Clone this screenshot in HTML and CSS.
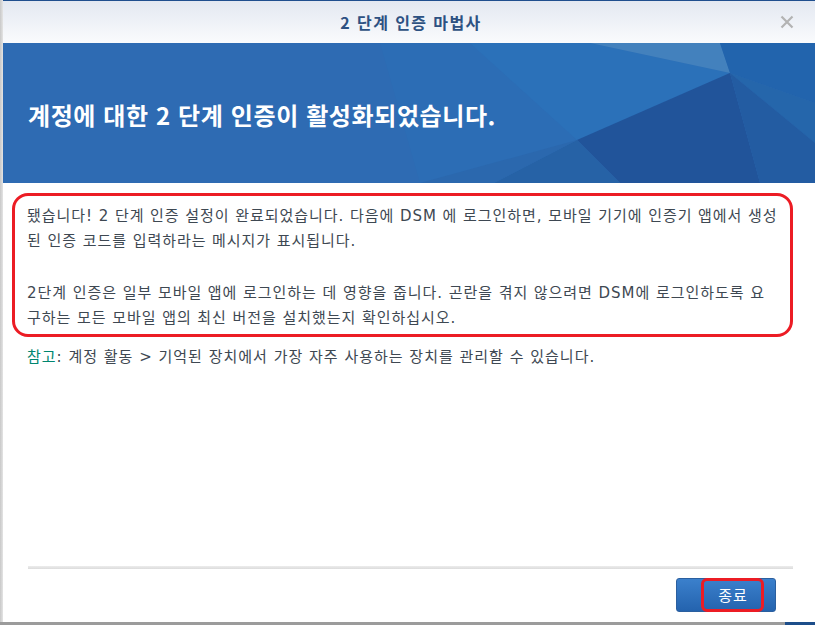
FILE: index.html
```html
<!DOCTYPE html>
<html lang="ko">
<head>
    <meta charset="UTF-8">
    <title>2 단계 인증 마법사</title>
    <link rel="stylesheet" href="styles.css">
</head>
<body>
    <div class="frame">
        <div class="dialog">
            <div class="dialog-header">
                <span class="dialog-title">2 단계 인증 마법사</span>
                <svg class="close-btn" width="14" height="14" viewBox="0 0 14 14">
                    <path d="M1.5 1.5 L12.5 12.5 M12.5 1.5 L1.5 12.5" stroke="#b3b3b3" stroke-width="2.2" fill="none"/>
                </svg>
            </div>

            <div class="banner">
                <svg class="banner-bg" width="815" height="140" viewBox="0 0 815 140" preserveAspectRatio="none">
                    <rect width="815" height="140" fill="#2e6bb3"/>
                    <polygon points="380,0 590,0 730,30 577,97 470,140 420,140" fill="#2c6db5"/>
                    <polygon points="470,0 590,0 730,30 577,97" fill="#2b71b9"/>
                    <polygon points="590,0 720,0 730,30" fill="#4381bd"/>
                    <polygon points="720,0 815,0 815,60 730,30" fill="#2264ad"/>
                    <polygon points="730,30 815,60 815,100" fill="#2566ab"/>
                    <polygon points="730,30 577,97 620,140 760,140" fill="#21549a"/>
                    <polygon points="730,30 760,140 815,140 815,100" fill="#235ca2"/>
                    <polygon points="577,97 494,140 620,140" fill="#2662a6"/>
                    <polygon points="420,140 494,140 577,97" fill="#2b68ae"/>
                </svg>
                <h1 class="banner-text">계정에 대한 2 단계 인증이 활성화되었습니다.</h1>
            </div>

            <div class="content">
                <div class="highlight">
                    <p>됐습니다! 2 단계 인증 설정이 완료되었습니다. 다음에 DSM 에 로그인하면, 모바일 기기에 인증기 앱에서 생성<br>된 인증 코드를 입력하라는 메시지가 표시됩니다.</p>
                    <p>2단계 인증은 일부 모바일 앱에 로그인하는 데 영향을 줍니다. 곤란을 겪지 않으려면 DSM에 로그인하도록 요<br>구하는 모든 모바일 앱의 최신 버전을 설치했는지 확인하십시오.</p>
                </div>
                <p class="note"><span class="note-label">참고</span>: 계정 활동 &gt; 기억된 장치에서 가장 자주 사용하는 장치를 관리할 수 있습니다.</p>
            </div>

            <div class="footer">
                <div class="separator"></div>
                <div class="footer-buttons">
                    <button class="primary-btn"><span class="btn-mark">종료</span></button>
                </div>
            </div>
        </div>
        <div class="bottom-strip"><div class="strip-blue"></div></div>
    </div>
</body>
</html>
```

FILE: styles.css
```css
html, body {
    margin: 0;
    padding: 0;
}
body {
    width: 815px;
    height: 625px;
    overflow: hidden;
    background-color: #fff;
    font-family: "DejaVu Sans", "Noto Sans CJK KR", sans-serif;
    color: #3e4852;
}
.frame {
    width: 815px;
    height: 625px;
    display: flex;
    flex-direction: column;
    background: linear-gradient(to right, #c8c8c8, #e4e4e4 3px, #fff 3px);
}
.dialog {
    height: 622px;
    margin-left: 3px;
    background-color: #fff;
    display: flex;
    flex-direction: column;
}
.dialog-header {
    height: 42px;
    border-top: 1px solid #1f4f8e;
    background: linear-gradient(to bottom, #e3e8f1, #fafbfd);
    display: flex;
    align-items: center;
    justify-content: center;
    position: relative;
}
.dialog-title {
    font-family: "Noto Sans CJK KR", sans-serif;
    font-size: 16px;
    font-weight: bold;
    letter-spacing: 1.4px;
    color: #2d5182;
    margin-left: 4px;
}
.close-btn {
    position: absolute;
    right: 21px;
    top: 14px;
}
.banner {
    height: 140px;
    position: relative;
    overflow: hidden;
    display: flex;
    align-items: center;
}
.banner-bg {
    position: absolute;
    left: -3px;
    top: 0;
}
.banner-text {
    position: relative;
    margin: 0 0 0 25px;
    padding-top: 2px;
    font-family: "Noto Sans CJK KR", sans-serif;
    font-size: 24px;
    font-weight: bold;
    letter-spacing: 0.6px;
    color: #fff;
}
.content {
    flex: 1;
    padding: 10px 22px 0 9px;
}
.highlight {
    border: 3px solid #ec1c24;
    border-radius: 16px;
    padding: 8px 10px 3px 12px;
}
.highlight p {
    margin: 0 0 27px 0;
    font-size: 15px;
    line-height: 25px;
    letter-spacing: 0.95px;
    white-space: nowrap;
}
.highlight p:last-child {
    margin-bottom: 0;
}
.note {
    margin: 8px 0 0 15px;
    font-size: 15px;
    line-height: 25px;
    letter-spacing: 1px;
    white-space: nowrap;
}
.note-label {
    color: #00866f;
}
.footer {
    margin: 0 22px 0 25px;
    padding-bottom: 10px;
}
.separator {
    height: 3px;
    background: linear-gradient(to bottom, #ececec, #dcdcdc);
}
.footer-buttons {
    display: flex;
    justify-content: flex-end;
    padding: 9px 17px 0 0;
}
.primary-btn {
    width: 100px;
    height: 34px;
    border: 1px solid #2b5f9f;
    border-radius: 3px;
    background: linear-gradient(to bottom, #3b80cc, #2463ae);
    color: #fff;
    font-family: "Noto Sans CJK KR", sans-serif;
    font-size: 15px;
    letter-spacing: 1px;
    display: flex;
    align-items: center;
    justify-content: center;
    padding: 0;
}
.btn-mark {
    margin-left: 13px;
    border: 3px solid #ec1c24;
    border-radius: 6px;
    padding: 3px 13px 3px 14px;
    line-height: 22px;
}
.bottom-strip {
    height: 3px;
    background-color: #9b9b9b;
    display: flex;
    justify-content: flex-end;
}
.strip-blue {
    width: 30px;
    background-color: #1d4e8a;
}
```
